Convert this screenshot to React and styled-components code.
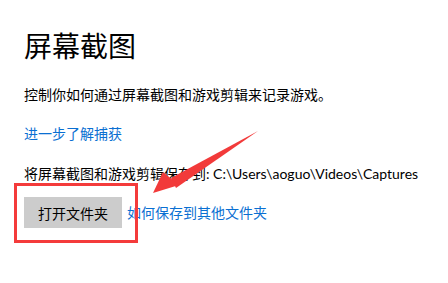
import React from 'react';
import styled, { createGlobalStyle } from 'styled-components';

const GlobalStyle = createGlobalStyle`
	html, body {
		margin: 0;
		padding: 0;
		background: #fff;
	}
	body {
		font-family: 'Lato', 'Noto Sans CJK SC', sans-serif;
		color: #000;
	}
`;

export default function App() {
	return (
		<Page>
			<GlobalStyle />
			<Title>屏幕截图</Title>
			<Desc>控制你如何通过屏幕截图和游戏剪辑来记录游戏。</Desc>
			<Link>进一步了解捕获</Link>
			<SavePath>将屏幕截图和游戏剪辑保存到: C:\Users\aoguo\Videos\Captures</SavePath>
			<ButtonRow>
				<Highlight />
				<Button>打开文件夹</Button>
				<Link $inline>如何保存到其他文件夹</Link>
			</ButtonRow>
			<Arrow viewBox='0 0 448 283'>
				<path d='M258 131 L171 178 L176 188 Z' fill='#f23a3a' />
				<path d='M153 193 L163 172 L179 185 Z' fill='#f23a3a' />
			</Arrow>
		</Page>
	);
}

const Page = styled.div`
	position: relative;
	width: 448px;
	height: 283px;
	padding: 26px 0 0 24px;
	box-sizing: border-box;
	overflow: hidden;
`;

const Title = styled.h1`
	margin: 0;
	font-size: 28px;
	font-weight: 400;
	line-height: 38px;
	font-family: 'Noto Sans CJK SC', sans-serif;
`;

const Desc = styled.p`
	margin: 21px 0 0;
	font-size: 14px;
	line-height: 20px;
`;

const Link = styled.div`
	margin: ${p => (p.$inline ? '0' : '19px 0 0')};
	font-size: 14px;
	line-height: 20px;
	color: #0a6fd2;
`;

const SavePath = styled.p`
	margin: 20px 0 0;
	font-size: 14px;
	line-height: 20px;
	white-space: nowrap;
`;

const ButtonRow = styled.div`
	position: relative;
	display: flex;
	align-items: center;
	gap: 5px;
	margin-top: 13px;
`;

const Button = styled.button`
	width: 98px;
	height: 31px;
	border: none;
	padding: 0;
	background: #cccccc;
	font-family: 'Noto Sans CJK SC', sans-serif;
	font-size: 14px;
	color: #000;
`;

const Highlight = styled.div`
	position: absolute;
	left: -10px;
	top: -14px;
	width: 124px;
	height: 60px;
	border: 3px solid #f43b3b;
	box-sizing: border-box;
`;

const Arrow = styled.svg`
	position: absolute;
	left: 0;
	top: 0;
	width: 448px;
	height: 283px;
	pointer-events: none;
`;
